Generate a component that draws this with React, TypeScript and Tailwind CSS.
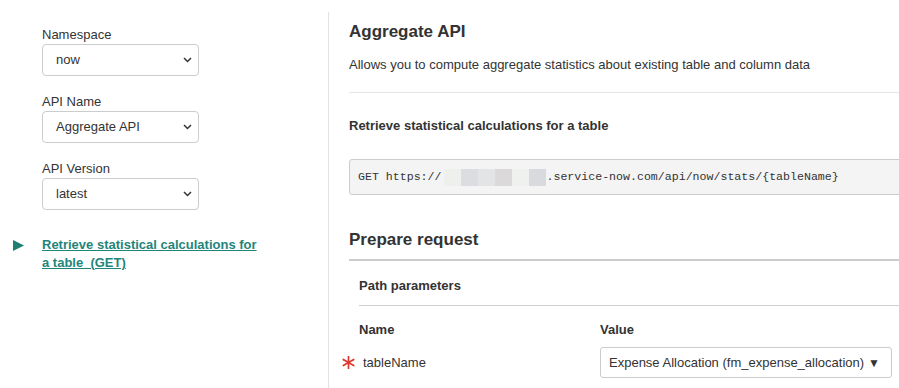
import React from "react";

const font = { fontFamily: '"Liberation Sans", Arial, sans-serif' };

function Chevron() {
  return (
    <svg width="9" height="6" viewBox="0 0 9 6" className="shrink-0">
      <path d="M1 1l3.5 3.5L8 1" fill="none" stroke="#333" strokeWidth="1.5" />
    </svg>
  );
}

function FakeSelect({ value }: { value: string }) {
  return (
    <div className="flex h-[32px] w-[157px] items-center justify-between rounded-[4px] border border-[#cccccc] bg-white pl-[13px] pr-[6px] text-[13px] text-[#333]">
      <span>{value}</span>
      <Chevron />
    </div>
  );
}

function Field({ label, value, first }: { label: string; value: string; first?: boolean }) {
  return (
    <div className={first ? "" : "mt-[17px]"}>
      <div className="text-[13px] leading-[18px] text-[#333]">{label}</div>
      <FakeSelect value={value} />
    </div>
  );
}

// redacted instance name in the url
const blurBlocks = ["#eef0ee", "#dcdde0", "#e2e4e6", "#dcd9da", "#eef1ee", "#d9dadd"];

export default function App() {
  return (
    <div className="flex h-[388px] w-[899px] overflow-hidden bg-white" style={font}>
      {/* Left nav */}
      <div className="w-[328px] shrink-0 pt-[26px]">
        <div className="pl-[42px]">
          <Field label="Namespace" value="now" first />
          <Field label="API Name" value="Aggregate API" />
          <Field label="API Version" value="latest" />
        </div>

        <div className="mt-[26px] flex pl-[13px]">
          <svg width="11" height="11" viewBox="0 0 11 11" className="mt-[4px] mr-[18px] shrink-0">
            <path d="M0 0L11 5.5L0 11Z" fill="#1d8073" />
          </svg>
          <div className="w-[222px] text-[13px] font-bold leading-[18px] text-[#1f857a] underline">
            {"Retrieve statistical calculations for a table\u00a0 (GET)"}
          </div>
        </div>
      </div>

      {/* Right content */}
      <div className="mt-[12px] min-w-0 flex-1 overflow-hidden border-l border-[#e3e3e3] pl-[20px] text-[#333]">
        <h1 className="pt-[10px] text-[17px] font-bold leading-[20px]">Aggregate API</h1>
        <p className="mt-[14px] text-[13px] leading-[18px]">
          Allows you to compute aggregate statistics about existing table and column data
        </p>
        <div className="mt-[18px] border-t border-[#e5e5e5]" />

        <h3 className="mt-[24px] text-[13px] font-bold leading-[18px]">
          Retrieve statistical calculations for a table
        </h3>

        <div
          className="mt-[24px] -mr-[8px] flex h-[36px] items-center rounded-[3px] border border-[#cccccc] bg-[#f4f4f4] pl-[8px] text-[11.6px] whitespace-nowrap text-[#333]"
          style={{ fontFamily: '"Liberation Mono", "DejaVu Sans Mono", monospace' }}
        >
          <span>GET https://</span>
          <span className="ml-[2px] flex">
            {blurBlocks.map((c, i) => (
              <span key={i} className="inline-block h-[17px] w-[17px]" style={{ background: c }} />
            ))}
          </span>
          <span className="ml-[1px]">.service-now.com/api/now/stats/{"{tableName}"}</span>
        </div>

        <h2 className="mt-[35px] border-b-2 border-[#cccccc] pb-[9px] text-[17px] font-bold leading-[20px]">
          Prepare request
        </h2>

        <div className="pl-[10px]">
          <div className="border-b border-[#d0d0d0] pt-[16px] pb-[10px] text-[13px] font-bold leading-[18px]">
            Path parameters
          </div>

          <div className="mt-[15px] flex text-[13px] font-bold leading-[18px]">
            <div className="w-[241px]">Name</div>
            <div>Value</div>
          </div>

          <div className="mt-[8px] -ml-[17px] flex items-center">
            <div className="flex w-[258px] items-center text-[13px]">
              <svg width="13" height="13" viewBox="0 0 13 13" className="mr-[8px] shrink-0">
                <g stroke="#e0352b" strokeWidth="1.7" strokeLinecap="round">
                  <path d="M6.5 0.5v12" />
                  <path d="M1.3 3.5l10.4 6" />
                  <path d="M1.3 9.5l10.4 -6" />
                </g>
              </svg>
              <span>tableName</span>
            </div>
            <div className="flex h-[31px] w-[292px] items-center rounded-[3px] border border-[#cccccc] bg-white pl-[8px] text-[13px]">
              <span>Expense Allocation (fm_expense_allocation)</span>
              <span className="ml-[4px] text-[12px]">▼</span>
            </div>
          </div>
        </div>
      </div>
    </div>
  );
}
